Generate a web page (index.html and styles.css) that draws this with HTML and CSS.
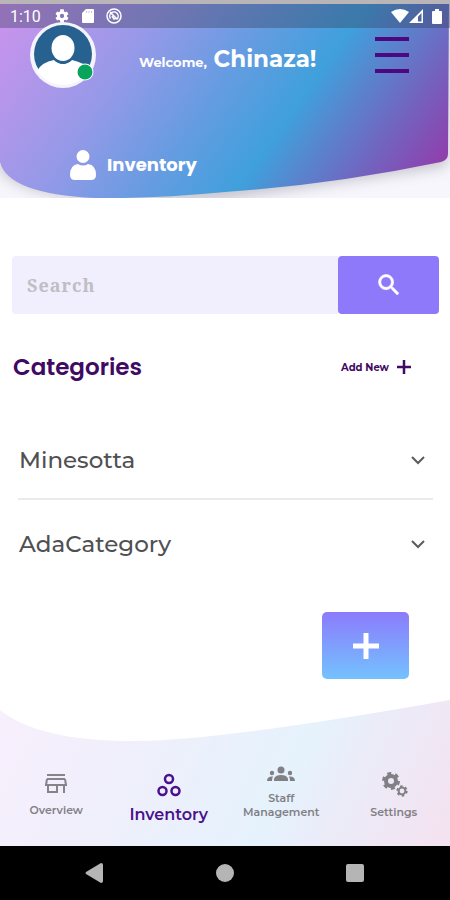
FILE: index.html
```html
<!DOCTYPE html>
<html lang="en">
<head>
<meta charset="utf-8">
<meta name="viewport" content="width=device-width, initial-scale=1">
<title>Inventory</title>
<link rel="stylesheet" href="styles.css">
</head>
<body>
<div class="app">
  <header class="hero">
    <svg class="backdrop" viewBox="0 0 450 198" preserveAspectRatio="none" aria-hidden="true">
      <defs>
        <linearGradient id="sky" gradientUnits="userSpaceOnUse" x1="0" y1="0" x2="377" y2="264">
          <stop offset="0" stop-color="#cd92ee"/>
          <stop offset=".14" stop-color="#b496ea"/>
          <stop offset=".3" stop-color="#9699e8"/>
          <stop offset=".5" stop-color="#659ce1"/>
          <stop offset=".66" stop-color="#3fa0dc"/>
          <stop offset=".74" stop-color="#5688cf"/>
          <stop offset=".87" stop-color="#7461be"/>
          <stop offset="1" stop-color="#923dab"/>
        </linearGradient>
        <filter id="soft" x="-10%" y="-10%" width="120%" height="130%"><feGaussianBlur stdDeviation="7"/></filter>
      </defs>
      <rect width="450" height="198" fill="#f7f6fc"/>
      <path d="M0 0H448V160Q448 166 440 167L225 199Q30 208 0 170Z" fill="#77727f" opacity=".4" filter="url(#soft)"/>
      <path d="M0 0H449L448 154Q448 160 441 162Q330 185 225 192Q150 199 95 198Q8 194 0 162Z" fill="url(#sky)"/>
    </svg>
    <div class="status">
      <time>1:10</time>
      <svg width="16" height="16" viewBox="0 0 24 24" fill="#fff" aria-hidden="true"><path fill-rule="evenodd" d="M19.4 13a7.500 7.500 0 0 0 0-2l2.300-1.700-2.300-4-2.700 1.100a7.500 7.500 0 0 0-1.700-1L14.600 2H9.400L9 5.400a7.500 7.500 0 0 0-1.700 1L4.600 5.300l-2.300 4L4.600 11a7.500 7.500 0 0 0 0 2l-2.300 1.700 2.300 4 2.700-1.100a7.500 7.500 0 0 0 1.700 1l.4 3.400h5.200l.4-3.400a7.500 7.500 0 0 0 1.700-1l2.700 1.100 2.300-4zM12 15.200a3.200 3.200 0 1 1 0-6.400 3.200 3.200 0 0 1 0 6.400z"/></svg>
      <svg class="sd" width="12" height="14" viewBox="0 0 12 14" fill="#fff" aria-hidden="true"><path d="M4 0h7q1 0 1 1v12q0 1-1 1H1q-1 0-1-1V4z"/><path d="M4.500 2v2M7 2v2M9.500 2v2" stroke="#c9c6dc"/></svg>
      <svg width="16" height="16" viewBox="0 0 16 16" fill="none" stroke="#fff" stroke-width="1.500" aria-hidden="true"><circle cx="8" cy="8" r="7"/><path d="M4.500 10.500A4.200 4.200 0 1 1 10.500 11.500M4 4l7 7M6 8l2 3 2.500-1"/></svg>
      <span class="grow"></span>
      <svg width="18" height="14" viewBox="0 0 18 14" fill="#fff" aria-hidden="true"><path d="M0 3Q9-3 18 3L9 14z"/></svg>
      <svg width="15" height="14" viewBox="0 0 15 14" aria-hidden="true"><path fill="#fff" fill-rule="evenodd" d="M0 14L14 0V14zM9 12.500h3.500V4L9 7.800z"/></svg>
      <svg class="battery" width="10" height="15" viewBox="0 0 10 15" fill="#fff" aria-hidden="true"><path d="M3 0h4v2h2q1 0 1 1v11q0 1-1 1H1q-1 0-1-1V3q0-1 1-1h2z"/></svg>
    </div>
    <div class="greeting">
      <svg class="avatar" width="68" height="68" viewBox="0 0 68 68" role="img" aria-label="Profile">
        <circle cx="34" cy="34" r="33" fill="#f5f4fa"/>
        <circle cx="34" cy="33" r="29" fill="#27618f"/>
        <path d="M8 50Q13 41 25 39Q34 47 43 39Q56 42 60 48Q52 63 34 64Q17 63 8 50Z" fill="#fff"/>
        <ellipse cx="34" cy="28" rx="13" ry="15" fill="#27618f"/>
        <ellipse cx="34" cy="27" rx="11.500" ry="13" fill="#fff"/>
        <circle cx="56" cy="51" r="8.500" fill="#fff"/><circle cx="56" cy="51" r="7.500" fill="#08a45c"/>
      </svg>
      <p class="welcome">Welcome, <strong>Chinaza!</strong></p>
      <button class="menu" aria-label="Menu"><span></span><span></span><span></span></button>
    </div>
    <h1 class="title">
      <svg width="26" height="30" viewBox="0 0 26 30" fill="#fff" aria-hidden="true"><circle cx="13" cy="6.500" r="6.500"/><path d="M8 14Q13 17 18 14Q26 15 26 25Q26 30 21 30H5Q0 30 0 25Q0 15 8 14Z"/></svg>
      Inventory
    </h1>
  </header>

  <main>
    <form class="search">
      <input type="search" placeholder="Search" aria-label="Search">
      <button type="button" aria-label="Search"><svg width="28" height="28" viewBox="0 0 24 24" fill="#fff" stroke="#fff" stroke-width=".5" aria-hidden="true"><path d="M15.500 14h-.79l-.28-.27A6.470 6.470 0 0 0 16 9.500 6.500 6.500 0 1 0 9.500 16c1.610 0 3.090-.59 4.230-1.570l.27.280v.79l5 4.990L20.490 19zm-6 0a4.500 4.500 0 1 1 0-9 4.500 4.500 0 0 1 0 9z"/></svg></button>
    </form>
    <div class="heading">
      <h2>Categories</h2>
      <button class="add-new">Add New <svg width="14" height="14" viewBox="0 0 14 14" stroke="#3f0a63" stroke-width="2.500" aria-hidden="true"><path d="M7 0v14M0 7h14"/></svg></button>
    </div>
    <div class="categories">
      <button class="category">Minesotta <svg width="14" height="10" viewBox="0 0 14 10" fill="none" stroke="#5b5b5d" stroke-width="2" aria-hidden="true"><path d="M1 2l6 6 6-6"/></svg></button>
      <button class="category">AdaCategory <svg width="14" height="10" viewBox="0 0 14 10" fill="none" stroke="#5b5b5d" stroke-width="2" aria-hidden="true"><path d="M1 2l6 6 6-6"/></svg></button>
    </div>
    <button class="fab" aria-label="Add category"><svg width="26" height="26" viewBox="0 0 26 26" stroke="#fff" stroke-width="5" aria-hidden="true"><path d="M13 0v26M0 13h26"/></svg></button>
  </main>

  <nav class="tabs">
    <svg class="backdrop" viewBox="0 0 450 146" preserveAspectRatio="none" aria-hidden="true">
      <defs><linearGradient id="mist" gradientUnits="userSpaceOnUse" x1="0" y1="0" x2="400" y2="200">
        <stop offset="0" stop-color="#f9effd"/><stop offset=".28" stop-color="#f0effb"/><stop offset=".66" stop-color="#e5f2fc"/><stop offset=".8" stop-color="#ecebf8"/><stop offset="1" stop-color="#f3e3f1"/>
      </linearGradient></defs>
      <path d="M0 10Q40 42 138 41Q225 40 450 0V146H0Z" fill="url(#mist)"/>
    </svg>
    <a href="#overview"><svg width="24" height="24" viewBox="0 0 24 24" fill="none" stroke="#858489" stroke-width="2" aria-hidden="true"><path d="M3 3h18M3 7h18M3 7l-1 6h20l-1-6M4 13v7h9v-7M20 13v8"/></svg>Overview</a>
    <a class="active" href="#inventory" aria-current="page"><svg width="26" height="26" viewBox="0 0 26 26" fill="none" stroke="#4b118c" stroke-width="2.500" aria-hidden="true"><circle cx="13" cy="7" r="4"/><circle cx="6.500" cy="19" r="4"/><circle cx="19.500" cy="19" r="4"/></svg>Inventory</a>
    <a class="staff" href="#staff"><svg width="28" height="20" viewBox="0 0 28 20" fill="#818085" aria-hidden="true"><circle cx="14" cy="6" r="3.500"/><path d="M7 17v-2Q8 11 14 11t7 4v2z"/><circle cx="5" cy="9" r="2.200"/><circle cx="23" cy="9" r="2.200"/><path d="M0 17q0-5 6-4.500Q5 14 5 17zM28 17q0-5-6-4.500Q23 14 23 17z"/></svg><span>Staff<br>Management</span></a>
    <a href="#settings"><svg width="28" height="28" viewBox="0 0 28 28" fill="none" stroke="#818085" aria-hidden="true"><circle cx="11" cy="11" r="5" stroke-width="4"/><circle cx="11" cy="11" r="7.500" stroke-width="3" stroke-dasharray="3.930"/><circle cx="22" cy="21" r="3.400" stroke-width="2"/><circle cx="22" cy="21" r="4.700" stroke-width="2" stroke-dasharray="2.460"/></svg>Settings</a>
  </nav>
  <div class="system">
    <button aria-label="Back"><svg width="20" height="20" viewBox="0 0 20 20" fill="#b5b5b5" aria-hidden="true"><path d="M1 9L16 0q2 0 2 2v16q0 2-2 2L1 11q-1-1 0-2z"/></svg></button>
    <button aria-label="Home"><svg width="20" height="20" viewBox="0 0 20 20" fill="#b5b5b5" aria-hidden="true"><circle cx="10" cy="10" r="9"/></svg></button>
    <button aria-label="Recent apps"><svg width="20" height="20" viewBox="0 0 20 20" fill="#b5b5b5" aria-hidden="true"><rect x="1" y="1" width="18" height="18" rx="2"/></svg></button>
  </div>
</div>
</body>
</html>
```
FILE: styles.css
```css
* { box-sizing: border-box; }
body, h1, h2, p { margin: 0; }
body { background: #fff; font-family: Poppins, Inter, sans-serif; }
button { border: 0; padding: 0; background: none; font: inherit; color: inherit; cursor: pointer; }
svg { display: block; flex: none; }
.app { display: flex; flex-direction: column; min-height: 100vh; }
.backdrop { position: absolute; inset: 0; z-index: -1; width: 100%; height: 100%; }

.hero { position: relative; z-index: 0; color: #fff; padding-bottom: 18px; overflow: hidden; }
.status { display: flex; align-items: center; height: 28px; padding: 0 8px 0 10px; border-top: 4px solid #b9b4b8; background: rgba(50, 55, 85, .36); }
.status time { width: 44px; font: 16px Roboto, sans-serif; }
.sd { margin: 0 12px; }
.grow { flex: 1; }
.battery { margin-left: 8px; }
.greeting { display: flex; align-items: center; gap: 42px; margin-top: -7px; padding: 0 41px 0 29px; }
.welcome { flex: 1; padding-top: 8px; font-family: Montserrat, Poppins, sans-serif; font-size: 13px; font-weight: 700; white-space: nowrap; }
.welcome strong { margin-left: 3px; font-size: 23px; font-weight: 700; }
.menu { display: flex; flex-direction: column; justify-content: space-between; width: 34px; height: 36px; }
.menu span { height: 4px; background: #4b087f; }
.title { display: flex; align-items: center; gap: 11px; margin-top: 61px; padding-left: 70px; font-size: 18px; line-height: 30px; font-weight: 700; }

main { flex: 1; padding: 58px 11px 20px 12px; }
.search { display: flex; height: 58px; }
.search input { flex: 1; min-width: 0; border: 0; border-radius: 4px 0 0 4px; padding: 0 15px; background: #f1eefe; font: 700 18px "Noto Serif", "Liberation Serif", serif; letter-spacing: 1px; }
.search input::placeholder { color: #c0bec4; opacity: 1; }
.search button { display: grid; place-items: center; width: 101px; border-radius: 4px; background: #8f79fb; }
.heading { display: flex; align-items: center; justify-content: space-between; height: 40px; margin-top: 33px; padding: 0 28px 0 1px; color: #3f0a63; }
h2 { font-size: 23px; font-weight: 600; }
.add-new { display: flex; align-items: center; gap: 8px; font-family: Montserrat, Poppins, sans-serif; font-size: 10px; font-weight: 700; }
.categories { margin: 28px 6px 0; font-family: Montserrat, Poppins, sans-serif; }
.category { display: flex; align-items: center; justify-content: space-between; width: 100%; height: 83px; padding: 6px 8px 0 1px; font-size: 23px; font-weight: 500; color: #505052; }
.category + .category { border-top: 2px solid #ebebec; }
.fab { display: grid; place-items: center; width: 87px; height: 67px; margin: 31px 30px 0 auto; border-radius: 5px; background: linear-gradient(#8b7bfc, #74c2ff); }

.tabs { position: relative; z-index: 0; display: grid; grid-template-columns: repeat(4, 1fr); height: 146px; padding-top: 62px; font-family: Montserrat, Poppins, sans-serif; }
.tabs a { display: flex; flex-direction: column; align-items: center; justify-content: center; gap: 7px; height: 64px; color: #818085; font-size: 11px; line-height: 14px; font-weight: 600; text-align: center; text-decoration: none; }
.tabs a.active { height: 72px; color: #4b118c; font-size: 16px; line-height: 20px; }
.tabs a.staff { height: 58px; }
.system { display: flex; justify-content: space-around; align-items: center; height: 54px; padding: 0 30px; background: #000; }
```
